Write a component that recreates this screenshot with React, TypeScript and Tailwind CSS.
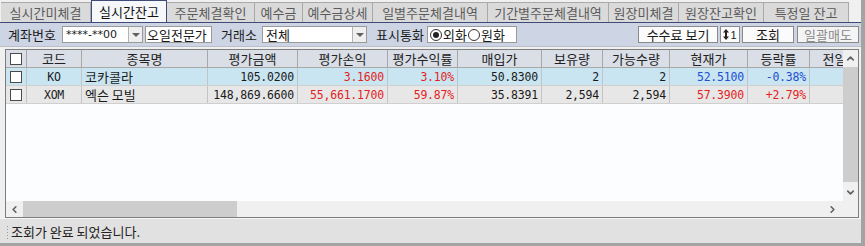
import React from "react";
import { ChevronDown, ChevronLeft, ChevronRight, ChevronUp } from "lucide-react";

type Tab = { label: string; w: string; active?: boolean };

const tabs: Tab[] = [
  { label: "실시간미체결", w: "w-[90px]" },
  { label: "실시간잔고", w: "w-[76px]", active: true },
  { label: "주문체결확인", w: "w-[88px]" },
  { label: "예수금", w: "w-[48px]" },
  { label: "예수금상세", w: "w-[70px]" },
  { label: "일별주문체결내역", w: "w-[115px]" },
  { label: "기간별주문체결내역", w: "w-[121px]" },
  { label: "원장미체결", w: "w-[70px]" },
  { label: "원장잔고확인", w: "w-[85px]" },
  { label: "특정일 잔고", w: "w-[85px]" },
];

type Col = { key: string; title: string; w: string; align: string; mono?: boolean };

const cols: Col[] = [
  { key: "code", title: "코드", w: "w-[55px]", align: "justify-center", mono: true },
  { key: "name", title: "종목명", w: "w-[126px]", align: "justify-start pl-[3px]" },
  { key: "amt", title: "평가금액", w: "w-[90px]", align: "justify-end pr-[3px]", mono: true },
  { key: "pl", title: "평가손익", w: "w-[90px]", align: "justify-end pr-[3px]", mono: true },
  { key: "rate", title: "평가수익률", w: "w-[70px]", align: "justify-end pr-[3px]", mono: true },
  { key: "buy", title: "매입가", w: "w-[84px]", align: "justify-end pr-[3px]", mono: true },
  { key: "qty", title: "보유량", w: "w-[61px]", align: "justify-end pr-[3px]", mono: true },
  { key: "avail", title: "가능수량", w: "w-[67px]", align: "justify-end pr-[3px]", mono: true },
  { key: "price", title: "현재가", w: "w-[78px]", align: "justify-end pr-[3px]", mono: true },
  { key: "chg", title: "등락률", w: "w-[62px]", align: "justify-end pr-[3px]", mono: true },
  { key: "prev", title: "전일대비", w: "w-[74px]", align: "justify-end pr-[3px]", mono: true },
];

const RED = "text-[#e41e1e]";
const BLUE = "text-[#1e4fd0]";

const rows: { bg: string; cells: Record<string, [string, string?]> }[] = [
  {
    bg: "bg-[#c9e5f1]",
    cells: {
      code: ["KO"],
      name: ["코카콜라"],
      amt: ["105.0200"],
      pl: ["3.1600", RED],
      rate: ["3.10%", RED],
      buy: ["50.8300"],
      qty: ["2"],
      avail: ["2"],
      price: ["52.5100", BLUE],
      chg: ["-0.38%", BLUE],
      prev: [""],
    },
  },
  {
    bg: "bg-[#e7e7e7]",
    cells: {
      code: ["XOM"],
      name: ["엑슨 모빌"],
      amt: ["148,869.6600"],
      pl: ["55,661.1700", RED],
      rate: ["59.87%", RED],
      buy: ["35.8391"],
      qty: ["2,594"],
      avail: ["2,594"],
      price: ["57.3900", RED],
      chg: ["+2.79%", RED],
      prev: [""],
    },
  },
];

const Check = () => <span className="block h-[12px] w-[12px] border border-[#4a4a4a] bg-white" />;

const DropBtn = () => (
  <span className="flex h-full w-[14px] items-center justify-center border-l border-[#b4b4b4] bg-[#efefef]">
    <span className="block h-0 w-0 border-x-[4px] border-t-[4px] border-x-transparent border-t-[#606060]" />
  </span>
);

const Radio = ({ on }: { on?: boolean }) => (
  <span className="flex h-[12px] w-[12px] items-center justify-center rounded-full border border-[#333] bg-white">
    {on && <span className="block h-[6px] w-[6px] rounded-full bg-[#222]" />}
  </span>
);

export default function App() {
  return (
    <div className="flex h-[246px] w-[865px] overflow-hidden bg-[#a3a3a3] font-['Noto_Sans_CJK_KR','Noto_Sans',sans-serif] text-[12px] leading-[14px] text-[#1a1a1a]">
      <div className="flex h-[243px] w-[861px] flex-col bg-[#f0f0f0]">
        {/* tabs */}
        <div className="flex h-[22px] items-end pl-[1px]">
          {tabs.map((t) =>
            t.active ? (
              <div
                key={t.label}
                className={`${t.w} flex h-[22px] items-center justify-center border-x border-t border-[#3f4a78] bg-[#f6f7fa] text-[13px] text-[#111]`}
              >
                {t.label}
              </div>
            ) : (
              <div
                key={t.label}
                className={`${t.w} flex h-[20px] items-center justify-center border-r border-t border-[#a9a9a9] bg-[#dadada] text-[13px] text-[#5a5a5a]`}
              >
                {t.label}
              </div>
            )
          )}
        </div>

        {/* toolbar */}
        <div className="flex h-[25px] items-center border-t border-b border-t-[#3f4a78] border-b-[#b9bec9] bg-[#cdd5e5] pl-[8px] pr-[2px] text-[13px]">
          <span className="w-[54px]">계좌번호</span>
          <div className="flex h-[17px] w-[81px] items-stretch border border-[#9a9a9a] bg-white">
            <span className="flex flex-1 items-center pl-[3px] font-['DejaVu_Sans',sans-serif] text-[11px]">****-**00</span>
            <DropBtn />
          </div>
          <div className="ml-[2px] flex h-[17px] w-[67px] items-center border border-[#9a9a9a] bg-white pl-[1px]">
            오일전문가
          </div>
          <span className="ml-[9px] w-[41px]">거래소</span>
          <div className="flex h-[17px] w-[105px] items-stretch border border-[#9a9a9a] bg-white">
            <span className="flex flex-1 items-center pl-[3px]">전체</span>
            <DropBtn />
          </div>
          <span className="ml-[9px] w-[51px]">표시통화</span>
          <div className="flex h-[17px] w-[90px] items-center gap-[1px] border border-[#9a9a9a] bg-white pl-[2px]">
            <Radio on />
            <span>외화</span>
            <Radio />
            <span>원화</span>
          </div>
          <div className="ml-auto flex h-[17px] items-stretch gap-[2px]">
            <button className="w-[80px] border border-[#8a8a8a] bg-[#fbfbfb]">수수료 보기</button>
            <button className="flex w-[20px] items-center justify-center gap-[1px] border border-[#8a8a8a] bg-[#fbfbfb]">
              <svg width="6" height="11" viewBox="0 0 6 11">
                <path d="M3 0 L6 3.5 H4 V7.5 H6 L3 11 L0 7.5 H2 V3.5 H0 Z" fill="#222" />
              </svg>
              <span className="font-['Liberation_Sans',sans-serif] text-[11px]">1</span>
            </button>
            <button className="w-[52px] border border-[#8a8a8a] bg-[#fbfbfb]">조회</button>
            <button className="ml-[1px] w-[62px] border border-[#8a8a8a] bg-[#f4f4f4] text-[#8a8a8a]">일괄매도</button>
          </div>
        </div>

        <div className="h-[2px]" />

        {/* grid panel */}
        <div className="ml-[5px] flex h-[169px] w-[854px] flex-col border border-[#7d7d7d] bg-white">
          <div className="flex h-[151px]">
            <div className="flex-1 overflow-hidden bg-[#fcfdfe]">
              <div className="flex h-[18px] w-max border-b border-[#a8a8a8] bg-[#d9dee7] text-[13px]">
                <div className="flex w-[21px] items-center justify-center border-r border-[#a8a8a8]">
                  <Check />
                </div>
                {cols.map((c) => (
                  <div
                    key={c.key}
                    className={`${c.w} flex items-center justify-center border-r border-[#a8a8a8] text-[#222]`}
                  >
                    {c.title}
                  </div>
                ))}
              </div>
              {rows.map((r, i) => (
                <div key={i} className={`flex h-[18px] w-max border-b border-[#cfcfcf] ${r.bg}`}>
                  <div className="flex w-[21px] items-center justify-center border-r border-[#c4c4c4]">
                    <Check />
                  </div>
                  {cols.map((c) => {
                    const [v, color] = r.cells[c.key];
                    return (
                      <div
                        key={c.key}
                        className={`${c.w} flex items-center border-r border-[#c4c4c4] ${c.align} ${color ?? ""} ${
                          c.mono ? "font-['DejaVu_Sans_Mono',monospace] text-[11.5px] tracking-[-0.2px]" : "text-[13px]"
                        }`}
                      >
                        {v}
                      </div>
                    );
                  })}
                </div>
              ))}
            </div>
            {/* vertical scrollbar */}
            <div className="flex w-[15px] flex-col items-stretch bg-[#f0f0f0]">
              <div className="flex h-[17px] items-center justify-center">
                <ChevronUp size={11} strokeWidth={3.5} color="#606060" />
              </div>
              <div className="h-[115px] bg-[#cdcdcd]" />
              <div className="flex flex-1 items-end justify-center pb-[3px]">
                <ChevronDown size={11} strokeWidth={3.5} color="#606060" />
              </div>
            </div>
          </div>
          {/* horizontal scrollbar */}
          <div className="flex h-[16px] items-stretch bg-[#f0f0f0]">
            <div className="flex w-[17px] items-center justify-center">
              <ChevronLeft size={11} strokeWidth={3.5} color="#606060" />
            </div>
            <div className="w-[214px] bg-[#cdcdcd]" />
            <div className="flex flex-1 items-center justify-end pr-[20px]">
              <ChevronRight size={11} strokeWidth={3.5} color="#606060" />
            </div>
          </div>
        </div>

        {/* status bar */}
        <div className="flex h-[25px] items-center border-t border-[#f6f6f6] bg-[#e1e1e1] pl-[6px] pt-[1px]">
          <span className="mr-[2px] h-[14px] w-[3px] bg-[radial-gradient(#9a9a9a_40%,transparent_45%)] bg-[length:3px_3px]" />
          <span className="text-[13px] text-[#222]">조회가 완료 되었습니다.</span>
        </div>
      </div>
      <div className="w-[4px]" />
    </div>
  );
}
